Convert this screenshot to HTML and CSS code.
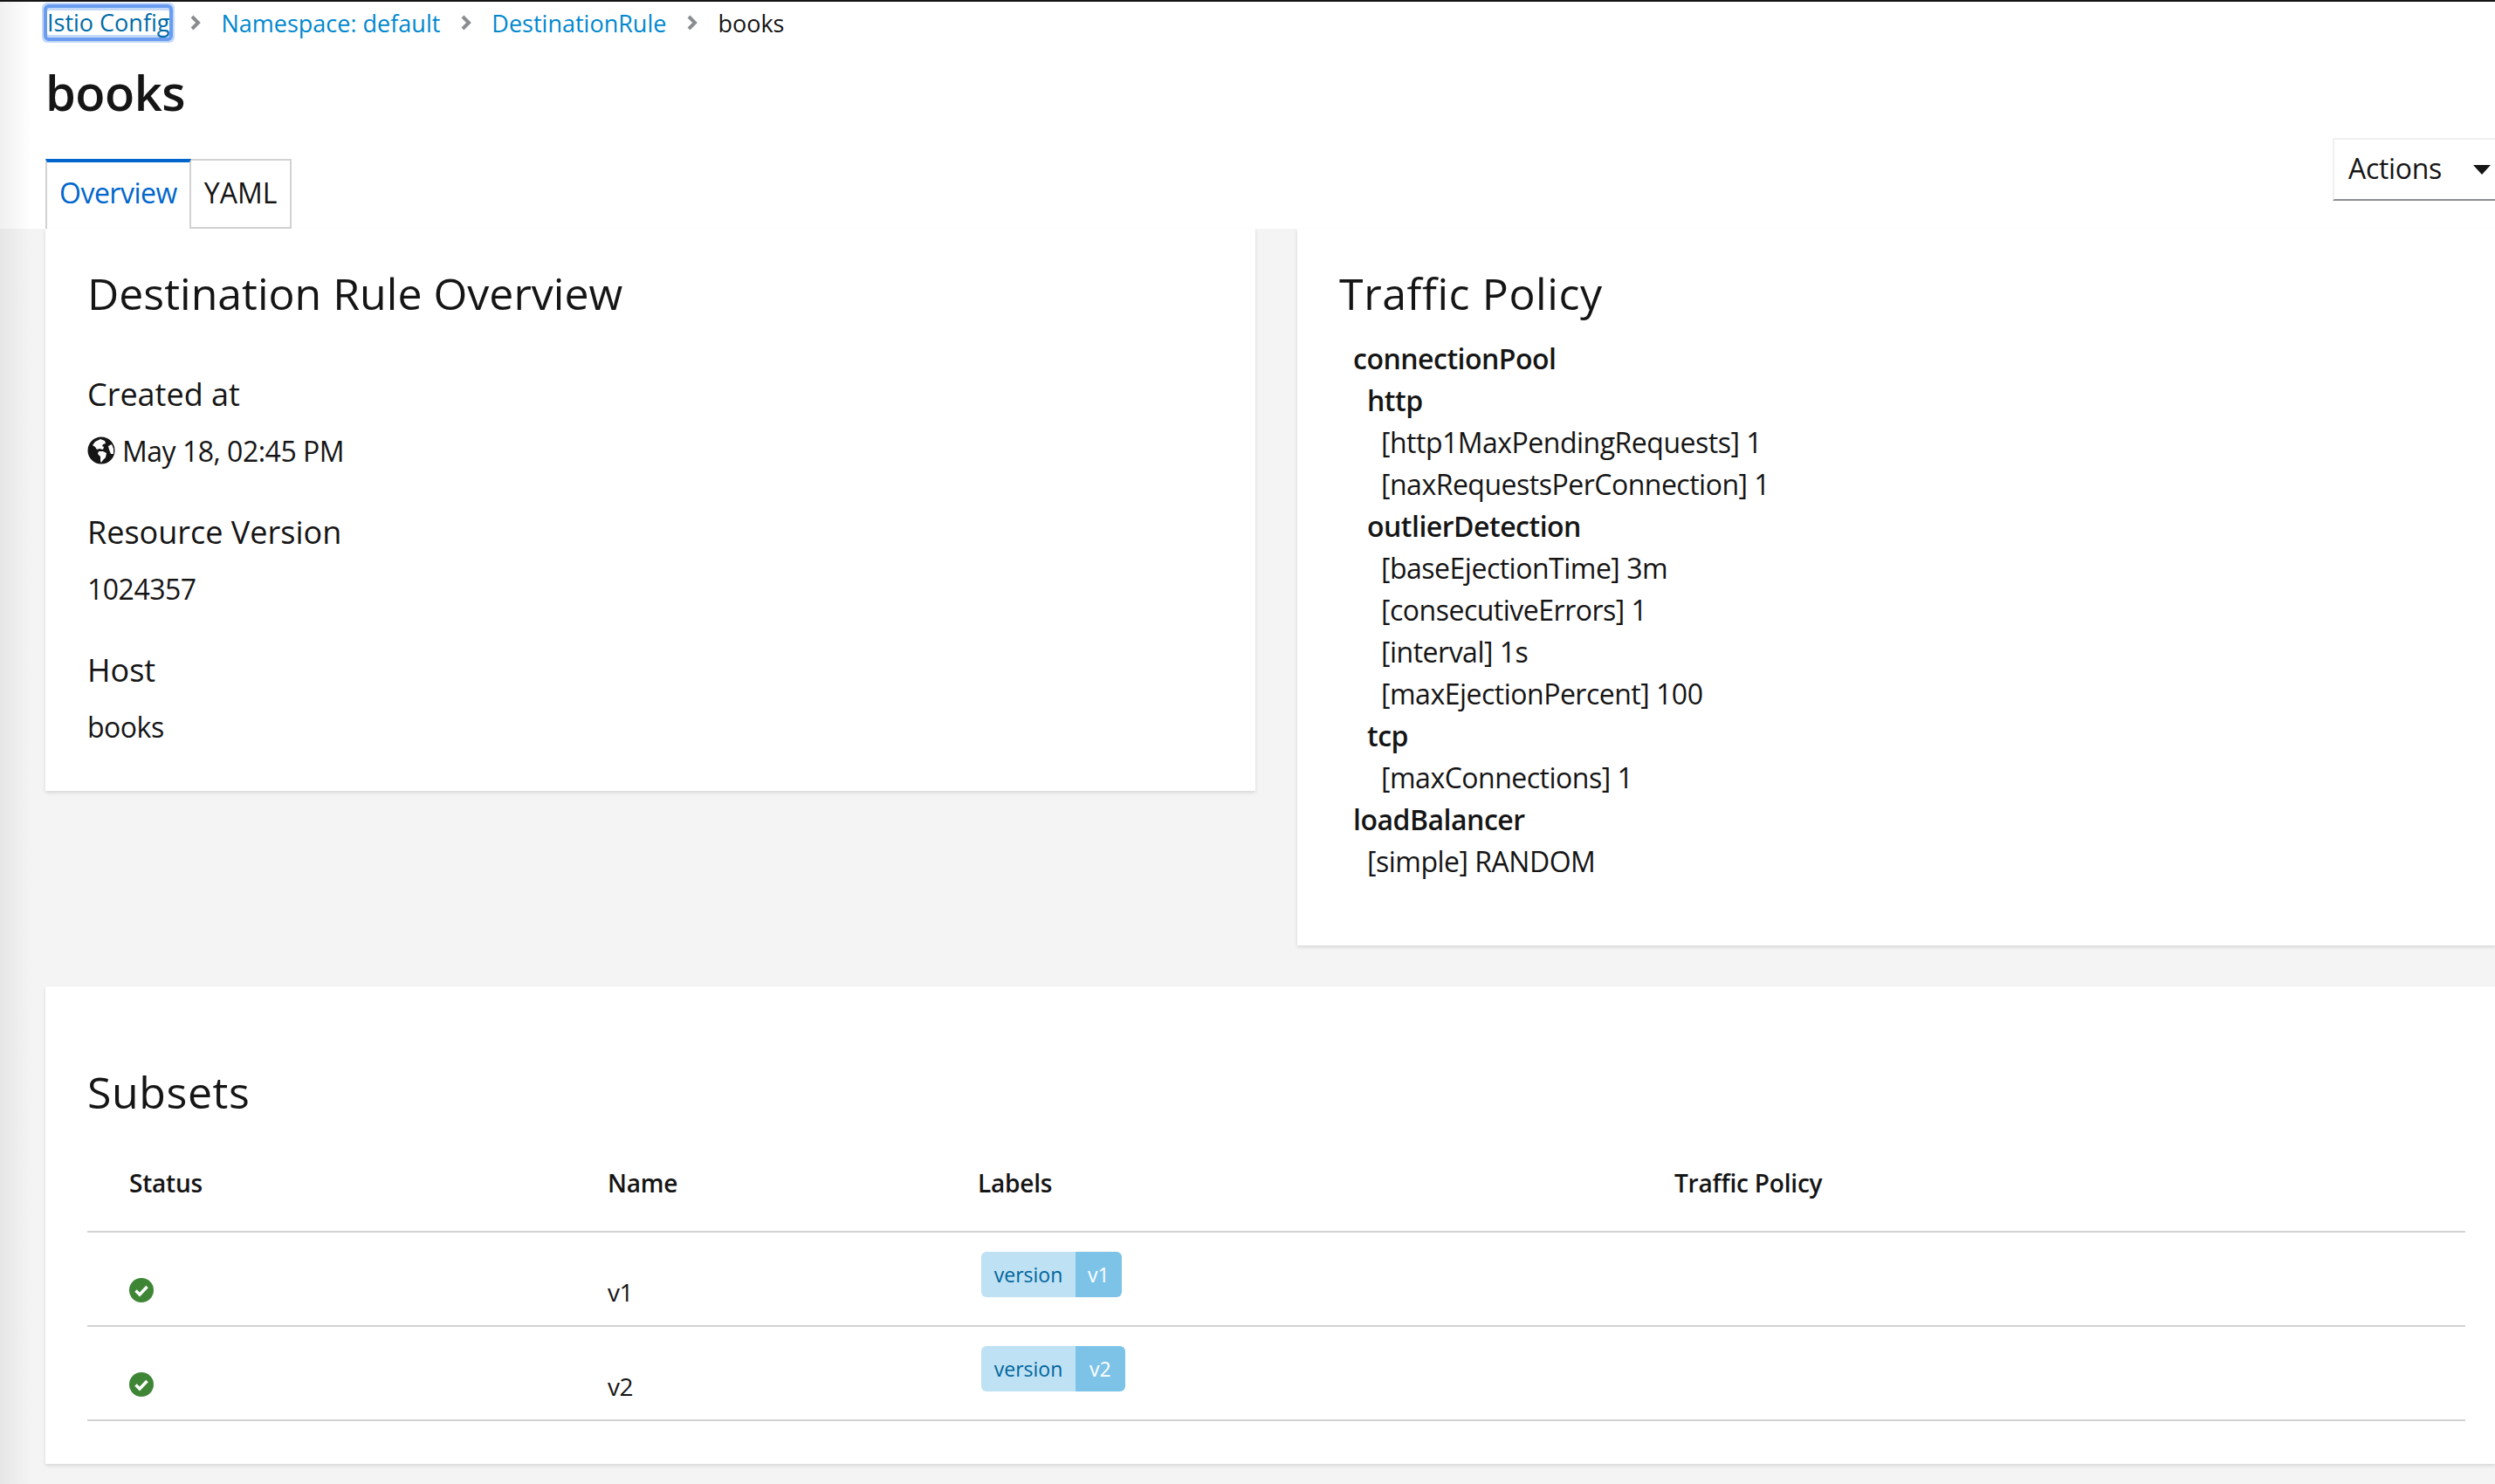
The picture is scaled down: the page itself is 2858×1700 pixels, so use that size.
FILE: index.html
```html
<!DOCTYPE html>
<html lang="en">
	<head>
		<meta charset="UTF-8" />
		<title>books - DestinationRule</title>
		<link rel="stylesheet" href="styles.css">
	</head>
	<body>
		<div class="side-shadow"></div>
		<header class="page-header">
			<nav class="breadcrumb">
				<a href="#" class="crumb crumb-focus">Istio Config</a>
				<svg class="crumb-sep" viewBox="0 0 12 20"><path d="M2 3l7 7-7 7" /></svg>
				<a href="#" class="crumb">Namespace: default</a>
				<svg class="crumb-sep" viewBox="0 0 12 20"><path d="M2 3l7 7-7 7" /></svg>
				<a href="#" class="crumb">DestinationRule</a>
				<svg class="crumb-sep" viewBox="0 0 12 20"><path d="M2 3l7 7-7 7" /></svg>
				<span class="crumb crumb-current">books</span>
			</nav>
			<h1 class="page-title">books</h1>
			<div class="tab-row">
				<ul class="tabs">
					<li class="tab tab-active">Overview</li>
					<li class="tab">YAML</li>
				</ul>
				<button class="actions-btn">Actions<span class="caret"></span></button>
			</div>
		</header>

		<main class="content">
			<div class="top-cards">
				<section class="card card-overview">
					<h2 class="card-title">Destination Rule Overview</h2>
					<h3 class="field-name">Created at</h3>
					<p class="field-value">
						<svg class="globe" viewBox="0 0 32 32">
							<circle cx="16" cy="16" r="15.5" fill="#151515" />
							<path fill="#fff" d="M9 6l6-3 5 2 1 3-3 1-1 2 2 1-1 3-4-1-3 1-2-3-3-2z" />
							<path fill="#fff" d="M13 17l5 0 4 2-1 5-3 3-2 3-1-2 0-5-3-3z" />
							<path fill="#fff" d="M24 11l4-2 2 5 0 6-3 0-2-5z" />
						</svg>
						May 18, 02:45 PM
					</p>
					<h3 class="field-name">Resource Version</h3>
					<p class="field-value">1024357</p>
					<h3 class="field-name">Host</h3>
					<p class="field-value">books</p>
				</section>
				<section class="card card-policy">
					<h2 class="card-title">Traffic Policy</h2>
					<div class="tree">
						<div class="tree-key lvl-0">connectionPool</div>
						<div class="tree-key lvl-1">http</div>
						<div class="lvl-2">[http1MaxPendingRequests] 1</div>
						<div class="lvl-2">[naxRequestsPerConnection] 1</div>
						<div class="tree-key lvl-1">outlierDetection</div>
						<div class="lvl-2">[baseEjectionTime] 3m</div>
						<div class="lvl-2">[consecutiveErrors] 1</div>
						<div class="lvl-2">[interval] 1s</div>
						<div class="lvl-2">[maxEjectionPercent] 100</div>
						<div class="tree-key lvl-1">tcp</div>
						<div class="lvl-2">[maxConnections] 1</div>
						<div class="tree-key lvl-0">loadBalancer</div>
						<div class="lvl-1">[simple] RANDOM</div>
					</div>
				</section>
			</div>

			<section class="card card-subsets">
				<h2 class="card-title">Subsets</h2>
				<table class="subsets">
					<colgroup>
						<col class="col-status" />
						<col class="col-name" />
						<col class="col-labels" />
						<col />
					</colgroup>
					<thead>
						<tr>
							<th>Status</th>
							<th>Name</th>
							<th>Labels</th>
							<th>Traffic Policy</th>
						</tr>
					</thead>
					<tbody>
						<tr>
							<td class="cell-status">
								<svg class="ok-icon" viewBox="0 0 28 28"><circle cx="14" cy="14" r="14" /><path d="M7.5 14.5l4.5 4.5 8.5-9" /></svg>
							</td>
							<td class="cell-name">v1</td>
							<td class="cell-labels"><span class="label"><span class="label-key">version</span><span class="label-val label-val-short">v1</span></span></td>
							<td></td>
						</tr>
						<tr>
							<td class="cell-status">
								<svg class="ok-icon" viewBox="0 0 28 28"><circle cx="14" cy="14" r="14" /><path d="M7.5 14.5l4.5 4.5 8.5-9" /></svg>
							</td>
							<td class="cell-name">v2</td>
							<td class="cell-labels"><span class="label"><span class="label-key">version</span><span class="label-val">v2</span></span></td>
							<td></td>
						</tr>
					</tbody>
				</table>
			</section>
		</main>
	</body>
</html>
```

FILE: styles.css
```css
/* Page basics */
* {
	box-sizing: border-box;
}
html,
body {
	margin: 0;
	padding: 0;
}
body {
	position: relative;
	width: 2858px;
	height: 1700px;
	overflow: hidden;
	background-color: #f4f4f4;
	border-top: 2px solid #151515;
	font-family: "Open Sans", Arial, sans-serif;
	font-size: 32px;
	letter-spacing: -0.5px;
	color: #151515;
}
.side-shadow {
	position: absolute;
	top: 0;
	left: 0;
	bottom: 0;
	width: 36px;
	background: linear-gradient(to right, rgba(0, 0, 0, 0.06), rgba(0, 0, 0, 0));
}

/* Header */
.page-header {
	height: 260px;
	padding-left: 52px;
	background-color: #fff;
}
.breadcrumb {
	display: flex;
	align-items: center;
	height: 48px;
	font-size: 27px;
	letter-spacing: 0;
}
.crumb {
	color: #0088ce;
	text-decoration: none;
}
.crumb-focus {
	margin-left: 2px;
	outline: 4px solid #6a9df0;
	border-radius: 2px;
	box-shadow: 0 0 0 6px #c4d9fa, inset 0 3px 0 #c4d9fa, inset 0 -3px 0 #c4d9fa;
	line-height: 34px;
	color: #006ba6;
}
.crumb-current {
	color: #151515;
}
.crumb-sep {
	width: 12px;
	height: 20px;
	margin: 0 23.5px;
	fill: none;
	stroke: #8a8d90;
	stroke-width: 4;
}
.page-title {
	margin: 13px 0 0;
	height: 80px;
	line-height: 84px;
	font-size: 56px;
	font-weight: 600;
}
.tab-row {
	display: flex;
	justify-content: space-between;
	align-items: flex-start;
	margin-top: 39px;
}
.tabs {
	display: flex;
	margin: 0;
	padding: 0;
	list-style: none;
}
.tab {
	height: 80px;
	padding: 0 15px;
	line-height: 74px;
	border: 2px solid #d2d2d2;
	border-left-width: 0;
	background-color: #fff;
	letter-spacing: 0;
}
.tab-active {
	padding: 0 14px;
	line-height: 70px;
	border-top: 4px solid #06c;
	border-left: 2px solid #d2d2d2;
	border-bottom: 0;
	color: #06c;
	letter-spacing: -0.5px;
}
.actions-btn {
	display: flex;
	align-items: center;
	width: 186px;
	height: 72px;
	margin-top: -24px;
	padding: 0 0 3px 16px;
	background-color: #fff;
	border: 2px solid #f0f0f0;
	border-bottom-color: #8a8d90;
	border-right: 0;
	font-family: inherit;
	font-size: 32px;
	letter-spacing: -0.3px;
	color: #151515;
}
.caret {
	width: 0;
	height: 0;
	margin: 3px 0 0 36px;
	border-left: 10px solid transparent;
	border-right: 10px solid transparent;
	border-top: 11px solid #151515;
}

/* Cards */
.content {
	padding-left: 52px;
}
.top-cards {
	display: grid;
	grid-template-columns: 1386px 1372px;
	column-gap: 48px;
	align-items: start;
}
.card {
	padding: 48px;
	background-color: #fff;
	box-shadow: 0 2px 4px rgba(3, 3, 3, 0.12);
}
.card-overview {
	height: 644px;
}
.card-policy {
	height: 821px;
	padding-right: 0;
}
.card-title {
	margin: 0;
	height: 52px;
	line-height: 52px;
	font-size: 50px;
	font-weight: 400;
	letter-spacing: 0.6px;
}
.card-overview .card-title {
	letter-spacing: 0;
}
.field-name {
	margin: 46px 0 0;
	height: 48px;
	line-height: 48px;
	font-size: 36px;
	font-weight: 400;
	letter-spacing: 0;
}
.card-title + .field-name {
	margin-top: 66px;
}
.field-value {
	margin: 16px 0 0;
	height: 48px;
	display: flex;
	align-items: center;
	gap: 8px;
}
.globe {
	width: 32px;
	height: 32px;
}
.tree {
	margin-top: 25px;
	line-height: 48px;
}
.tree-key {
	font-weight: 600;
}
.lvl-0 {
	padding-left: 16px;
}
.lvl-1 {
	padding-left: 32px;
}
.lvl-2 {
	padding-left: 48px;
}

/* Subsets table */
.card-subsets {
	height: 547px;
	margin-top: 47px;
	padding: 95px 34px 0 48px;
}
.subsets {
	width: 2724px;
	margin-top: 34px;
	border-collapse: collapse;
	table-layout: fixed;
}
.col-status {
	width: 548px;
}
.col-name {
	width: 424px;
}
.col-labels {
	width: 798px;
}
.subsets th {
	height: 100px;
	padding: 0 0 12px 48px;
	text-align: left;
	font-size: 28px;
	font-weight: 600;
	letter-spacing: -0.2px;
	border-bottom: 2px solid #d2d2d2;
}
.subsets td {
	height: 108px;
	padding: 0 0 0 48px;
	font-size: 28px;
	border-bottom: 2px solid #d2d2d2;
}
.cell-status {
	vertical-align: top;
}
.ok-icon {
	display: block;
	width: 28px;
	height: 28px;
	margin-top: 52px;
}
.ok-icon circle {
	fill: #3e8635;
}
.ok-icon path {
	fill: none;
	stroke: #fff;
	stroke-width: 3.5;
}
.subsets .cell-name {
	padding-top: 30px;
}
.cell-labels {
	vertical-align: top;
}
.label {
	display: inline-flex;
	height: 52px;
	margin: 22px 0 0 4px;
	border-radius: 6px;
	overflow: hidden;
	line-height: 52px;
	font-size: 23px;
	letter-spacing: 0;
}
.label-key {
	width: 108px;
	text-align: center;
	background-color: #bee1f4;
	color: #00659c;
}
.label-val {
	padding: 0 16px;
	background-color: #7dc3e8;
	color: #fff;
}
.label-val-short {
	padding: 0 14px;
}
```
